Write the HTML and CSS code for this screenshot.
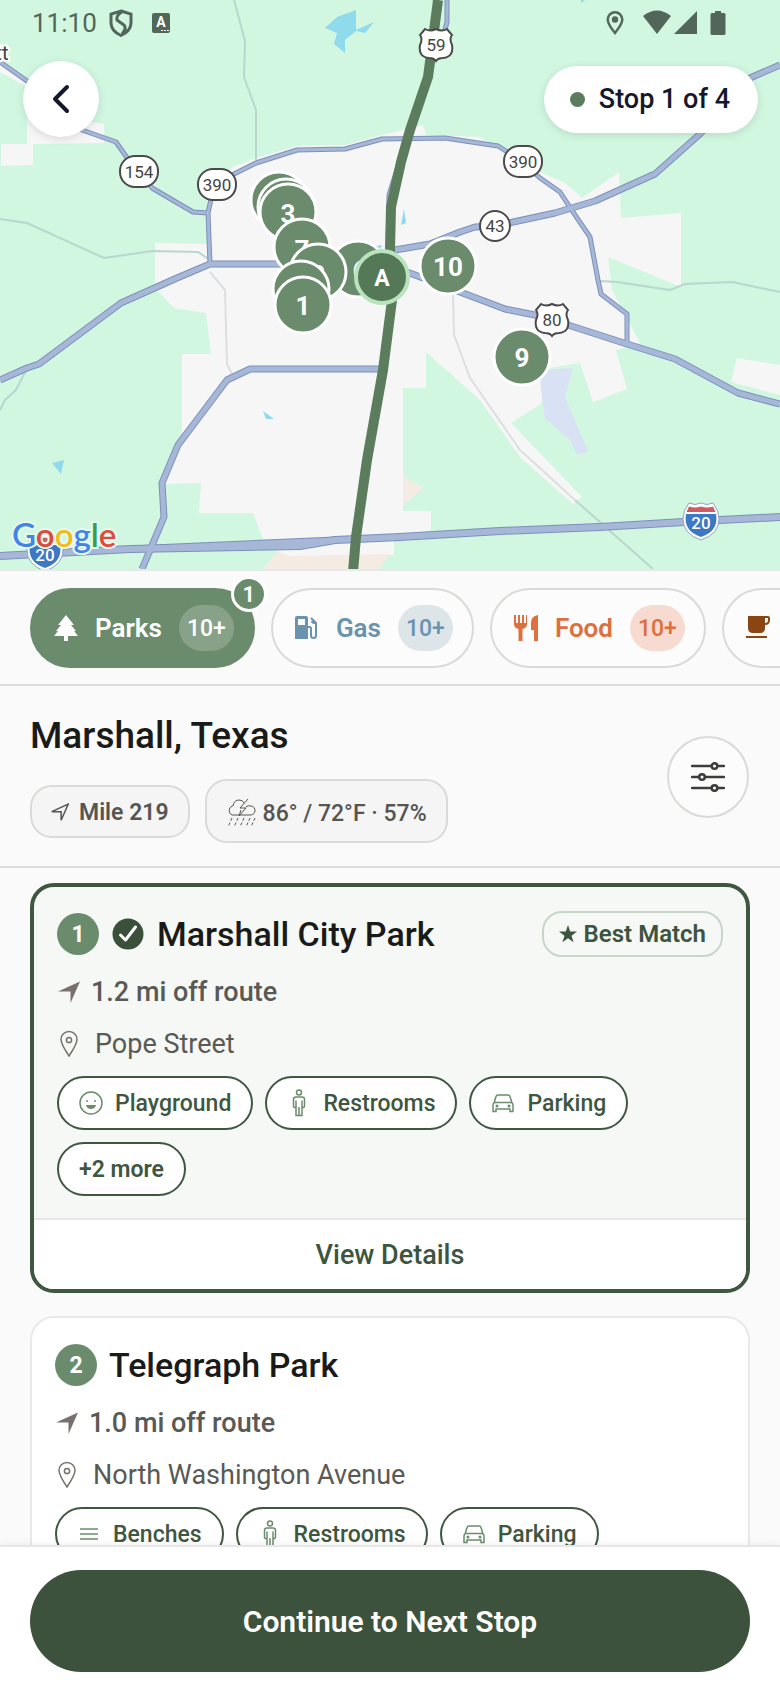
FILE: index.html
```html
<!DOCTYPE html>
<html lang="en">

<head>
    <meta charset="UTF-8" />
    <meta name="viewport" content="width=device-width, initial-scale=1.0" />
    <title>Stop 1 of 4 - Marshall, Texas</title>

    <link rel="stylesheet" href="styles.css">
</head>

<body>
    <!-- Shared icons -->
    <svg class="icon-defs" aria-hidden="true">
        <symbol id="icon-nav" viewBox="0 0 24 24">
            <path d="M1 11.5 23 1.5 13.5 23V11.5z" />
        </symbol>
        <symbol id="icon-pin" viewBox="0 0 24 28">
            <path stroke-width="1.5" d="M12 26C8 20 4 14 4 9.500a8 8 0 0 1 16 0C20 14 16 20 12 26z" />
            <circle stroke-width="1.5" cx="12" cy="10" r="2.600" />
        </symbol>
        <symbol id="icon-person" viewBox="0 0 24 28">
            <circle stroke-width="1.5" cx="12" cy="3.500" r="2.500" />
            <path stroke-width="1.5" d="M9 8h6q2.500 0 2.500 2.500V17q0 1.500-1.200 1.500T15 17v-5.500V26.500H9V17q0 1.500-1.300 1.500T6.500 17v-6.500Q6.500 8 9 8zM9 11.500V18M12 18v8.500" />
        </symbol>
        <symbol id="icon-car" viewBox="0 0 24 24">
            <path stroke-width="1.5" d="M3 12 5 5.500Q5.400 4 7 4h10q1.600 0 2 1.500L21 12q1 .5 1 2v6.500h-3V18H5v2.500H2V14q0-1.500 1-2zM3.500 11.500h17" />
            <circle class="dot" cx="6" cy="15" r="1.500" />
            <circle class="dot" cx="18" cy="15" r="1.500" />
        </symbol>
        <symbol id="us-shield" viewBox="0 0 36 36">
            <path d="M7 2q5 3 11 0 6 3 11 0l5 6q-3 4 0 10 2 12-9 13-5 0-7 3-2-3-7-3Q0 30 2 18q3-6 0-10z" />
        </symbol>
        <symbol id="interstate" viewBox="0 0 38 40">
            <path class="rim" d="M7 2q6 3 12 0 6 3 12 0 6 7 6 16 0 15-18 21Q1 33 1 18 1 9 7 2z" />
            <path class="blue" d="M4 13h30q3 17-15 23Q1 30 4 13z" />
            <path class="red" d="M7 5.500q6 2 12 0 6 2 12 0l2.500 5.500h-29z" />
        </symbol>
    </svg>

    <main class="screen">
        <section class="map" aria-label="Map">
            <svg class="map-canvas" viewBox="0 0 780 569" preserveAspectRatio="xMidYMid slice">
                <!-- Land -->
                <g class="land">
                    <path d="M233 167 256 158 297 146 345 145 390 133 423 125 426 135 480 137 500 150 540 172 565 183 582 198 619 172 621 218 681 213V287L608 257 612 290 640 343 616 350 627 389 593 402 580 363 550 368 541 404 511 423 582 497 573 504 520 457 480 400 426 352V388H403V511H431V530L394 540V555L290 557 277 551 263 539 253 513H199L201 483 161 484 182 440V354L211 354 206 313 174 308 155 288V243L208 244V215L212 190z" />
                    <path d="M27 110 104 124V143L33 144V165L1 166V144H27zM737 358 780 365V395L731 382zM0 60 30 80 25 86 0 72z" />
                </g>
                <path class="sand" d="M277 552 290 556 389 554 380 569H263zM403 476 424 488 403 505z" />
                <path class="reservoir" d="M540 370 573 368 565 397 588 452 577 455 570 440 545 418 541 390z" />
                <path class="water" d="M325 28 337 17 356 10V30L374 22 365 33 356 31 345 40V53L334 44 337 33zM404 209 401 225 406 223zM52 463 64 460 61 474zM263 411 274 419 266 419zM581 3l4-3-4 0zM376 246l6-1-2 4z" />

                <!-- Roads -->
                <g class="lane">
                    <path d="M234 0 245 41 244 77 256 110V160M0 219 27 223 104 258 152 251 198 252 210 260M0 410 5 400 16 390 25 372M600 281 617 282 670 290 685 284 732 282 780 292M575 500 653 569" />
                    <path class="lane-soft" d="M210 272 225 290 227 364 232 374M453 295 454 335 470 378 520 450 575 500" />
                </g>
                <g class="road-case">
                    <path class="thin" d="M0 62 27 81 82 130 116 142 130 162 152 188 193 212 208 213 213 190 230 176 256 163 297 150 345 149 382 139 445 138 498 146 520 160 540 178 560 192 571 209 590 237 598 280 601 294 627 314V342M210 264 208 213M447 0V22L441 45M400 160 389 195 388 250" />
                    <path d="M0 380 27 368 39 364 121 303 177 278 210 264H385L415 275 460 292 505 309 540 316 627 344 675 359 738 393 780 404M395 250 430 244 460 232 475 227 495 226 555 213 595 201 655 174 700 134 750 78 780 65M142 569 164 517 162 483 178 445 227 380 250 369H380" />
                    <path class="thick" d="M0 556 130 549 300 546 335 540 400 537 500 531 600 527 700 521 780 517" />
                    <path d="M130 549 335 540" />
                </g>
                <g class="road">
                    <path class="thin" d="M0 62 27 81 82 130 116 142 130 162 152 188 193 212 208 213 213 190 230 176 256 163 297 150 345 149 382 139 445 138 498 146 520 160 540 178 560 192 571 209 590 237 598 280 601 294 627 314V342M210 264 208 213M447 0V22L441 45M400 160 389 195 388 250" />
                    <path d="M0 380 27 368 39 364 121 303 177 278 210 264H385L415 275 460 292 505 309 540 316 627 344 675 359 738 393 780 404M395 250 430 244 460 232 475 227 495 226 555 213 595 201 655 174 700 134 750 78 780 65M142 569 164 517 162 483 178 445 227 380 250 369H380" />
                    <path class="thick" d="M0 556 130 549 300 546 335 540 400 537 500 531 600 527 700 521 780 517" />
                    <path d="M130 549 335 540" />
                </g>
                <path class="route" d="M438 0 430 62 428 77 410 130 401 162 391 207 390 250 392 300 383 370 367 460 356 537 353 572" />

                <!-- Road shields -->
                <g class="shield">
                    <rect x="120" y="156" width="38" height="31" rx="15" />
                    <text x="139" y="178">154</text>
                    <rect x="198" y="169" width="38" height="31" rx="15" />
                    <text x="217" y="191">390</text>
                    <rect x="504" y="146" width="38" height="31" rx="15" />
                    <text x="523" y="168">390</text>
                    <circle cx="495" cy="226" r="15" />
                    <text x="495" y="232">43</text>
                    <use href="#us-shield" x="418" y="27" width="36" height="36" />
                    <text x="436" y="51">59</text>
                    <use href="#us-shield" x="534" y="302" width="36" height="36" />
                    <text x="552" y="326">80</text>
                </g>
                <g class="interstate">
                    <use href="#interstate" x="682" y="501" width="38" height="40" />
                    <text x="701" y="529">20</text>
                    <use href="#interstate" x="26" y="532" width="38" height="40" />
                    <text x="45" y="561">20</text>
                </g>
                <text class="town" x="-5" y="60">tt</text>
                <text class="google" x="12" y="547"><tspan class="g-blue">G</tspan><tspan class="g-red">o</tspan><tspan class="g-yellow">o</tspan><tspan class="g-blue">g</tspan><tspan class="g-green">l</tspan><tspan class="g-red">e</tspan></text>

                <!-- Place pins -->
                <g class="pins">
                    <circle cx="279" cy="200" r="28" />
                    <circle cx="286" cy="207" r="28" />
                    <circle cx="288" cy="212" r="28" />
                    <text x="288" y="223">3</text>
                    <circle cx="302" cy="247" r="28" />
                    <text x="302" y="259">7</text>
                    <circle cx="358" cy="269" r="28" />
                    <text x="360" y="279">6</text>
                    <circle cx="318" cy="272" r="28" />
                    <text x="318" y="284">8</text>
                    <circle cx="301" cy="289" r="28" />
                    <circle cx="303" cy="305" r="28" />
                    <text x="303" y="315">1</text>
                    <circle class="current" cx="382" cy="277" r="26" />
                    <text class="current-label" x="382" y="286">A</text>
                    <circle cx="448" cy="266" r="28" />
                    <text x="448" y="276">10</text>
                    <circle cx="522" cy="357" r="28" />
                    <text x="522" y="367">9</text>
                </g>
            </svg>

            <div class="map-overlay">
                <div class="status-bar">
                    <span class="clock">11:10</span>
                    <svg class="status-shield" viewBox="0 0 24 28" width="24" height="28">
                        <path d="M12 2 22 5v9q0 8-10 12.500Q2 22 2 14V5zM13 3Q7 6 8 11l7 5q3 4-2 9" />
                    </svg>
                    <svg class="status-app" viewBox="0 0 18 20" width="18" height="20">
                        <rect width="18" height="20" rx="2" />
                        <text x="9" y="14">A</text>
                        <path d="M9 17h2v1H9zM12 17h2v1h-2zM15 17h2v1h-2z" />
                    </svg>
                    <svg class="status-icons" viewBox="0 0 120 26" width="120" height="26">
                        <path fill-rule="evenodd" d="M9 1a8.500 8.500 0 0 1 8.500 8.500C17.500 14 13 20 9 25 5 20 .5 14 .5 9.500A8.500 8.500 0 0 1 9 1zm0 2.500a6 6 0 0 0-6 6c0 3 3 7.500 6 11.500 3-4 6-8.500 6-11.500a6 6 0 0 0-6-6z" />
                        <circle cx="9" cy="9.500" r="3.200" />
                        <path d="M37 6q14-11 28 0L51 24zM91 1v23H68zM109 1h6v2h3q1.500 0 1.500 1.500v19q0 1.500-1.500 1.500h-12q-1.500 0-1.500-1.500v-19Q104.500 3 106 3h3z" />
                    </svg>
                </div>
                <div class="map-controls">
                    <button class="back-button" type="button" aria-label="Back">
                        <svg viewBox="0 0 24 32" width="24" height="32">
                            <path d="M18 4 6 16l12 12" />
                        </svg>
                    </button>
                    <div class="stop-pill"><span class="stop-dot"></span>Stop 1 of 4</div>
                </div>
            </div>
        </section>

        <nav class="tabs" aria-label="Categories">
            <button class="tab tab-active" type="button">
                <svg viewBox="0 0 24 26" width="24" height="26">
                    <path d="M12 0 20 10h-3l5 6h-2l4 5H14v5h-4v-5H0l4-5H2l5-6H4z" />
                </svg>
                Parks
                <span class="tab-count">10+</span>
                <span class="tab-badge">1</span>
            </button>
            <button class="tab tab-gas" type="button">
                <svg viewBox="0 0 24 26" width="24" height="26">
                    <path fill-rule="evenodd" d="M2 1h9q2 0 2 2v21H0V3q0-2 2-2zm1 3v6h7V4z" />
                    <path class="hose" d="M13 12h1.500q1.500 0 1.500 1.500v7q0 2.500 2.500 2.500t2.500-2.500V8l-5-5M21 8h-1.500Q17 8 17 6" />
                </svg>
                Gas
                <span class="tab-count">10+</span>
            </button>
            <button class="tab tab-food" type="button">
                <svg viewBox="0 0 24 26" width="24" height="26">
                    <path d="M0 0h2v8h2V0h2v8h2V0h2v8h2V0h1v9q0 4-4.500 5v12h-4V14Q0 13 0 9zM24 0v26h-4V15h-3V8q0-7 7-8z" />
                </svg>
                Food
                <span class="tab-count">10+</span>
            </button>
            <button class="tab tab-coffee" type="button">
                <svg viewBox="0 0 24 26" width="24" height="26">
                    <path fill-rule="evenodd" d="M2 1h20q2 0 2 2v2q0 5-5 5v3q0 5-5 5H7q-5 0-5-5zm17 2v5q3 0 3-3V3zM0 21h21v2H0z" />
                </svg>
                Coffee
                <span class="tab-count">10+</span>
            </button>
        </nav>

        <header class="place">
            <div class="place-info">
                <h1>Marshall, Texas</h1>
                <div class="place-facts">
                    <span class="fact">
                        <svg viewBox="0 0 24 24" width="18" height="18"><use href="#icon-nav" /></svg>
                        Mile 219
                    </span>
                    <span class="fact fact-weather">
                        <svg viewBox="0 0 30 30" width="30" height="30">
                            <path d="M11 17H6a5 5 0 0 1 0-9q1 0 1 0Q8 2 13 2q4 0 5 3M11 17h13a4.500 4.500 0 0 0 1-9q-3-1-5 1M22 1l-8 9h6l-7 8 2-6" />
                            <path class="rain" d="M6 20l-4 9M12 20l-4 9M18 20l-4 9M24 20l-4 9M29 20l-4 9" />
                        </svg>
                        86° / 72°F · 57%
                    </span>
                </div>
            </div>
            <button class="filter-button" type="button" aria-label="Filters">
                <svg viewBox="0 0 34 30" width="34" height="30">
                    <path stroke-width="2.500" d="M1 4h19M27 4h6M1 15h7M15 15h18M1 26h19M27 26h6" />
                    <circle stroke-width="2.500" cx="23.500" cy="4" r="2.800" />
                    <circle stroke-width="2.500" cx="11" cy="15" r="2.800" />
                    <circle stroke-width="2.500" cx="23.500" cy="26" r="2.800" />
                </svg>
            </button>
        </header>

        <section class="results">
            <article class="card card-selected">
                <div class="card-body">
                    <div class="card-header">
                        <span class="card-number">1</span>
                        <svg class="card-check" viewBox="0 0 32 32" width="32" height="32">
                            <circle cx="16" cy="16" r="15.500" />
                            <path d="M8.500 17l5 5L23.500 9" />
                        </svg>
                        <h2>Marshall City Park</h2>
                        <span class="best-match">
                            <svg viewBox="0 0 20 20" width="18" height="18">
                                <path d="M10 0 12.400 7.300H20L13.900 11.900 16.200 19.200 10 14.700 3.800 19.200 6.100 11.900 0 7.300H7.600z" />
                            </svg>
                            Best Match
                        </span>
                    </div>
                    <p class="distance">
                        <svg viewBox="0 0 24 24" width="24" height="24"><use href="#icon-nav" /></svg>
                        1.2 mi off route
                    </p>
                    <p class="address">
                        <svg viewBox="0 0 24 28" width="24" height="28"><use href="#icon-pin" /></svg>
                        Pope Street
                    </p>
                    <ul class="amenities">
                        <li>
                            <svg viewBox="0 0 24 24" width="24" height="24">
                                <circle stroke-width="1.500" cx="12" cy="12" r="11" />
                                <circle class="dot" cx="8" cy="10" r="1" />
                                <circle class="dot" cx="16" cy="10" r="1" />
                                <path class="dot" d="M7 14h10q-1 4-5 4t-5-4z" />
                            </svg>
                            Playground
                        </li>
                        <li>
                            <svg viewBox="0 0 24 28" width="24" height="28"><use href="#icon-person" /></svg>
                            Restrooms
                        </li>
                        <li>
                            <svg viewBox="0 0 24 24" width="24" height="24"><use href="#icon-car" /></svg>
                            Parking
                        </li>
                        <li class="more">+2 more</li>
                    </ul>
                </div>
                <button class="details-button" type="button">View Details</button>
            </article>

            <article class="card">
                <div class="card-body">
                    <div class="card-header">
                        <span class="card-number">2</span>
                        <h2>Telegraph Park</h2>
                    </div>
                    <p class="distance">
                        <svg viewBox="0 0 24 24" width="24" height="24"><use href="#icon-nav" /></svg>
                        1.0 mi off route
                    </p>
                    <p class="address">
                        <svg viewBox="0 0 24 28" width="24" height="28"><use href="#icon-pin" /></svg>
                        North Washington Avenue
                    </p>
                    <ul class="amenities">
                        <li>
                            <svg viewBox="0 0 24 24" width="24" height="24">
                                <path stroke-width="1.500" d="M3 7h18M3 12h18M3 17h18" />
                            </svg>
                            Benches
                        </li>
                        <li>
                            <svg viewBox="0 0 24 28" width="24" height="28"><use href="#icon-person" /></svg>
                            Restrooms
                        </li>
                        <li>
                            <svg viewBox="0 0 24 24" width="24" height="24"><use href="#icon-car" /></svg>
                            Parking
                        </li>
                    </ul>
                </div>
            </article>
        </section>

        <footer class="footer">
            <button class="continue-button" type="button">Continue to Next Stop</button>
        </footer>
    </main>
</body>

</html>
```

FILE: styles.css
```css
* {
    box-sizing: border-box;
}

html,
body {
    height: 100%;
    margin: 0;
    padding: 0;
}

body {
    font-family: Roboto, "Liberation Sans", sans-serif;
    background: #fafafa;
    color: #1a1a18;
}

button {
    font-family: inherit;
    cursor: pointer;
}

h1,
h2,
p,
ul {
    margin: 0;
    padding: 0;
}

svg {
    flex-shrink: 0;
}

.icon-defs {
    position: absolute;
    width: 0;
    height: 0;
}

.screen {
    display: flex;
    flex-direction: column;
    height: 100vh;
    overflow: hidden;
}

/* Map */
.map {
    position: relative;
    flex-shrink: 0;
    height: 571px;
    border-bottom: 2px solid #e6e9e8;
    background: #d1f7e1;
    overflow: hidden;
}

.map-canvas {
    display: block;
    width: 100%;
    height: 100%;
}

.land {
    fill: #f6f6f6;
}

.sand {
    fill: #f4ece2;
}

.reservoir {
    fill: #d9e1f5;
}

.water {
    fill: #90daee;
}

.lane,
.road-case,
.road,
.route {
    fill: none;
    stroke-linejoin: round;
}

.lane {
    stroke: #b9d6cf;
    stroke-width: 2;
}

.lane-soft {
    stroke: #dcdfe2;
}

.road-case {
    stroke: #7d90ba;
    stroke-width: 7;
}

.road-case .thin {
    stroke-width: 5;
}

.road-case .thick {
    stroke-width: 8;
}

.road {
    stroke: #a6b7d8;
    stroke-width: 5;
}

.road .thin {
    stroke-width: 3;
}

.road .thick {
    stroke-width: 6;
}

.route {
    stroke: #5b7d5d;
    stroke-width: 10;
}

.shield {
    fill: #fff;
    stroke: #4a4a4a;
    stroke-width: 2;
}

.shield text,
.interstate text {
    fill: #444;
    stroke: none;
    font-size: 17px;
    text-anchor: middle;
}

.interstate text {
    fill: #fff;
    font-weight: 500;
}

.rim {
    fill: #fff;
    stroke: #8ea2c8;
}

.blue {
    fill: #3c78c3;
}

.red {
    fill: #cc5b62;
}

.town {
    fill: #444;
    stroke: #fff;
    stroke-width: 4;
    paint-order: stroke;
    font-size: 21px;
}

.google {
    font-family: Lato, sans-serif;
    font-size: 33px;
    font-weight: 600;
    stroke: #e6faee;
    stroke-width: 4;
    paint-order: stroke;
}

.g-blue {
    fill: #4285e8;
}

.g-red {
    fill: #dd4b3e;
}

.g-yellow {
    fill: #f3bb1c;
}

.g-green {
    fill: #34a04f;
}

.pins {
    fill: #6b8c6c;
    stroke: #fff;
    stroke-width: 3;
}

.pins text {
    fill: #fff;
    stroke: none;
    font-size: 26px;
    font-weight: 700;
    text-anchor: middle;
}

.pins .current {
    fill: #557957;
    stroke: #b9e3bd;
    stroke-width: 4;
}

.pins .current-label {
    font-size: 23px;
}

.map-overlay {
    position: absolute;
    top: 0;
    left: 0;
    right: 0;
}

.status-bar {
    display: flex;
    align-items: center;
    height: 46px;
    padding: 0 54px 0 32px;
    color: #53665a;
    fill: #53665a;
}

.clock {
    font-size: 26px;
    margin-right: 12px;
}

.status-shield {
    fill: none;
    stroke: #53665a;
    stroke-width: 3;
    margin-right: 19px;
}

.status-app text {
    fill: #fff;
    font-size: 14px;
    font-weight: 700;
    text-anchor: middle;
}

.status-app path {
    fill: #fff;
}

.status-icons {
    margin-left: auto;
}

.map-controls {
    display: flex;
    align-items: center;
    justify-content: space-between;
    padding: 15px 22px 15px 23px;
}

.back-button {
    display: flex;
    align-items: center;
    justify-content: center;
    width: 76px;
    height: 76px;
    padding: 0;
    border: 0;
    border-radius: 50%;
    background: #fff;
    box-shadow: 0 2px 8px rgba(0, 0, 0, 0.12);
}

.back-button path {
    fill: none;
    stroke: #14182a;
    stroke-width: 4;
    stroke-linecap: round;
    stroke-linejoin: round;
}

.stop-pill {
    display: flex;
    align-items: center;
    height: 67px;
    padding: 0 28px 0 26px;
    border-radius: 34px;
    background: #fff;
    box-shadow: 0 2px 8px rgba(0, 0, 0, 0.12);
    color: #14182a;
    font-size: 27px;
    font-weight: 500;
}

.stop-dot {
    width: 15px;
    height: 15px;
    margin-right: 14px;
    border-radius: 50%;
    background: #5b7d5d;
}

/* Category tabs */
.tabs {
    display: flex;
    flex-shrink: 0;
    gap: 16px;
    padding: 17px 30px 16px;
    border-bottom: 2px solid #dcdcda;
    overflow: hidden;
}

.tab {
    position: relative;
    display: flex;
    flex-shrink: 0;
    align-items: center;
    height: 80px;
    padding: 0 19px 0 22px;
    border: 2px solid #dadad7;
    border-radius: 40px;
    background: #fcfcfc;
    font-size: 26px;
    font-weight: 600;
}

.tab svg {
    fill: currentColor;
    margin-right: 17px;
}

.tab .hose {
    fill: none;
    stroke: currentColor;
    stroke-width: 2;
}

.tab-count {
    height: 46px;
    margin-left: 17px;
    padding: 0 8px;
    border-radius: 23px;
    font-size: 23px;
    font-weight: 500;
    line-height: 48px;
}

.tab-active {
    border-color: #6b8c6c;
    background: #6b8c6c;
    color: #fff;
}

.tab-active .tab-count {
    background: #88a289;
}

.tab-gas {
    color: #6b93ae;
}

.tab-gas .tab-count {
    background: #dde5e9;
}

.tab-food {
    color: #de7040;
}

.tab-food .tab-count {
    background: #f7dbd0;
}

.tab-coffee {
    color: #8b4513;
}

.tab-badge {
    position: absolute;
    top: -14px;
    right: -14px;
    width: 36px;
    height: 36px;
    border: 3px solid #fff;
    border-radius: 50%;
    background: #6b8c6c;
    font-size: 22px;
    line-height: 32px;
    text-align: center;
}

/* Place header */
.place {
    display: flex;
    flex-shrink: 0;
    align-items: center;
    justify-content: space-between;
    padding: 24px 31px 23px 30px;
    border-bottom: 2px solid #dcdcda;
}

h1 {
    font-size: 37px;
    font-weight: 500;
    line-height: 52px;
}

.place-facts {
    display: flex;
    align-items: center;
    gap: 15px;
    margin-top: 17px;
}

.fact {
    display: flex;
    align-items: center;
    gap: 10px;
    height: 53px;
    padding: 2px 19px 0;
    border: 2px solid #dadad7;
    border-radius: 22px;
    background: #f5f5f5;
    color: #555552;
    font-size: 23px;
    font-weight: 600;
}

.fact svg {
    fill: none;
    stroke: #555552;
    stroke-width: 2;
}

.fact-weather {
    gap: 7px;
    height: 64px;
    padding-top: 4px;
    font-weight: 500;
}

.fact-weather svg {
    stroke-width: 1;
}

.fact-weather .rain {
    stroke-dasharray: 3 2;
}

.filter-button {
    display: flex;
    align-items: center;
    justify-content: center;
    width: 82px;
    height: 82px;
    padding: 0;
    border: 2px solid #dadad7;
    border-radius: 50%;
    background: #fcfcfc;
}

.filter-button svg {
    fill: none;
    stroke: #3c3c3a;
    stroke-linecap: round;
}

/* Results */
.results {
    flex: 1;
    min-height: 0;
    padding: 15px 30px 0;
    overflow-y: auto;
    scrollbar-width: none;
}

.card {
    margin-bottom: 23px;
    border: 2px solid #e9e9e8;
    border-radius: 24px;
    background: #fff;
    overflow: hidden;
}

.card-selected {
    border: 4px solid #3f5640;
    background: #f5f8f4;
}

.card-body {
    padding: 24px 23px 22px;
}

.card-header {
    display: flex;
    align-items: center;
    min-height: 46px;
}

.card-number {
    width: 42px;
    height: 42px;
    margin-right: 12px;
    border-radius: 50%;
    background: #6b8c6c;
    color: #fff;
    font-size: 23px;
    font-weight: 700;
    line-height: 44px;
    text-align: center;
}

.card-check {
    margin: 0 13px 0 1px;
    fill: #3a503b;
}

.card-check path {
    fill: none;
    stroke: #fff;
    stroke-width: 3;
    stroke-linecap: round;
    stroke-linejoin: round;
}

h2 {
    font-size: 34px;
    font-weight: 500;
    line-height: 42px;
}

.best-match {
    display: flex;
    align-items: center;
    gap: 7px;
    height: 46px;
    margin-left: auto;
    padding: 0 15px;
    border: 2px solid #c8d6c9;
    border-radius: 20px;
    color: #3d5440;
    font-size: 24px;
    font-weight: 600;
}

.best-match svg {
    fill: #3d5440;
}

.distance,
.address {
    display: flex;
    align-items: center;
    margin-top: 18px;
    color: #595955;
    font-size: 27px;
    line-height: 34px;
}

.distance {
    font-weight: 500;
}

.distance svg {
    fill: #78706c;
    margin-right: 10px;
}

.address svg {
    fill: none;
    stroke: #78706c;
    margin-right: 14px;
}

.amenities {
    display: flex;
    flex-wrap: wrap;
    gap: 12px;
    margin-top: 15px;
    list-style: none;
}

.amenities li {
    display: flex;
    align-items: center;
    gap: 12px;
    height: 54px;
    padding: 0 20px;
    border: 2px solid #3f5640;
    border-radius: 27px;
    background: #fff;
    color: #3f5640;
    font-size: 23px;
    font-weight: 500;
}

.amenities .more {
    font-weight: 600;
}

.amenities svg {
    fill: none;
    stroke: #6b8c6c;
}

.dot {
    fill: #6b8c6c;
    stroke: none;
}

.details-button {
    display: block;
    width: 100%;
    height: 71px;
    padding: 0;
    border: 0;
    border-top: 2px solid #e6e8e5;
    background: #fff;
    color: #3d5440;
    font-size: 27px;
    font-weight: 500;
}

/* Footer */
.footer {
    position: relative;
    flex-shrink: 0;
    padding: 23px 30px 24px;
    border-top: 2px solid #e6e6e6;
    background: #fff;
    box-shadow: 0 -2px 8px rgba(0, 0, 0, 0.05);
}

.continue-button {
    width: 100%;
    height: 102px;
    border: 0;
    border-radius: 51px;
    background: #3d523d;
    color: #fff;
    font-size: 30px;
    font-weight: 600;
}
```
